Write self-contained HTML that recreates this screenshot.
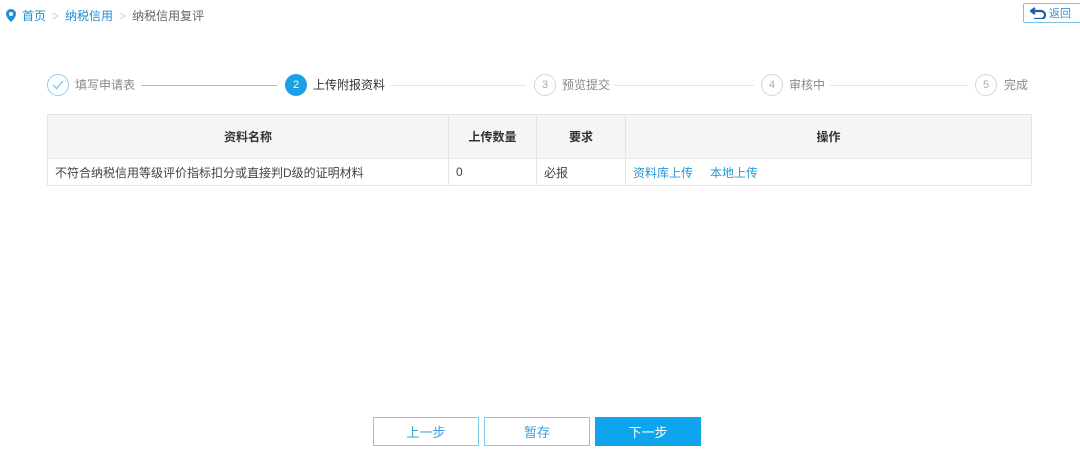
<!DOCTYPE html>
<html><head><meta charset="utf-8"><style>
*{margin:0;padding:0;box-sizing:border-box}
body{width:1080px;height:462px;background:#fff;font-family:"Liberation Sans","Noto Sans CJK SC",sans-serif;font-size:12px;color:#333;position:relative;overflow:hidden}
.a{position:absolute}
.bc{left:6px;top:7px;font-size:12px;color:#666;display:flex;align-items:center}
.bc .l{color:#1e8fd6}.bc .s{color:#ccc;margin:0 6px}
.ret{left:1023px;top:3px;width:60px;height:20px;border:1px solid #7cc3ea;border-radius:2px;font-size:11px;color:#3a8fd6;display:flex;align-items:center;padding-left:6px}
.c{width:22px;height:22px;border-radius:50%;border:1px solid #cfd8e0;color:#aaa;font-size:11px;display:flex;align-items:center;justify-content:center;top:74px}
.t{top:76px;font-size:12px;line-height:18px;color:#888}
.ln{top:85px;height:1px;background:#e6e6e6}
table{position:absolute;left:47px;top:114px;width:985px;border-collapse:collapse}
td,th{border:1px solid #e5e5e5;font-size:12px}
th{background:#f5f5f5;height:44px;font-weight:bold;color:#333}
td{height:27px;padding-left:7px;color:#444}
.bl{color:#1e9ad8}
.b{top:417px;width:106px;height:29px;border:1px solid #7ccbef;color:#3a9fd8;font-size:13px;display:flex;align-items:center;justify-content:center}
</style></head><body>
<div class="a bc"><svg width="10" height="13" viewBox="0 0 10 13"><path d="M5 0C2.2 0 0 2.2 0 5c0 3.5 5 8 5 8s5-4.5 5-8C10 2.2 7.8 0 5 0z" fill="#1e8fd6"/><circle cx="5" cy="5" r="2" fill="#fff"/></svg><span class="l" style="margin-left:6px">首页</span><span class="s">&gt;</span><span class="l">纳税信用</span><span class="s">&gt;</span><span>纳税信用复评</span></div>
<div class="a ret"><svg width="16" height="12" viewBox="0 0 16 12"><path d="M5 1L1 4l4 3M1 4h10a4 4 0 010 8H4" fill="none" stroke="#1a5fa8" stroke-width="2.2"/></svg><span style="margin-left:3px">返回</span></div>

<div class="a c" style="left:47px;border-color:#8fd0ef;color:#5ab8e8"><svg width="12" height="10" viewBox="0 0 12 10"><path d="M1 5l3.5 3.5L11 1" fill="none" stroke="#6cc0ea" stroke-width="1.2"/></svg></div>
<div class="a t" style="left:75px">填写申请表</div>
<div class="a ln" style="left:141px;width:136px;background:#7fcaf0"></div>
<div class="a c" style="left:285px;background:#1aa0e6;border-color:#1aa0e6;color:#fff">2</div>
<div class="a t" style="left:313px;color:#333">上传附报资料</div>
<div class="a ln" style="left:390px;width:136px"></div>
<div class="a c" style="left:534px">3</div>
<div class="a t" style="left:562px">预览提交</div>
<div class="a ln" style="left:614px;width:140px"></div>
<div class="a c" style="left:761px">4</div>
<div class="a t" style="left:789px">审核中</div>
<div class="a ln" style="left:830px;width:138px"></div>
<div class="a c" style="left:975px">5</div>
<div class="a t" style="left:1004px">完成</div>

<table>
<tr><th style="width:401px">资料名称</th><th style="width:88px">上传数量</th><th style="width:89px">要求</th><th>操作</th></tr>
<tr><td>不符合纳税信用等级评价指标扣分或直接判D级的证明材料</td><td>0</td><td>必报</td><td><span class="bl">资料库上传</span><span class="bl" style="margin-left:17px">本地上传</span></td></tr>
</table>

<div class="a b" style="left:373px">上一步</div>
<div class="a b" style="left:484px">暂存</div>
<div class="a b" style="left:595px;background:#0ea5ec;border-color:#0ea5ec;color:#fff">下一步</div>
</body></html>
